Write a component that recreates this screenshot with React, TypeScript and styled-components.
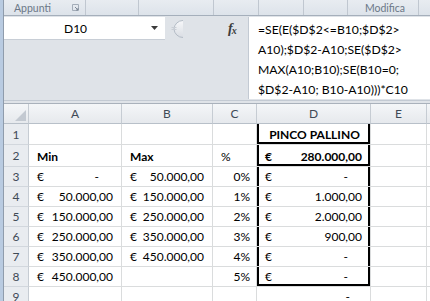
import styled, { createGlobalStyle } from "styled-components";

const GlobalStyle = createGlobalStyle`
  html, body {
    margin: 0;
    padding: 0;
  }
  body {
    background: #dfe3e8;
    font-family: Lato, "Liberation Sans", sans-serif;
  }
`;

const Frame = styled.div`
  width: 430px;
  height: 301px;
  overflow: hidden;
  box-sizing: border-box;
  border-left: 3px solid #b9cbe1;
`;

const Window = styled.div`
  height: 100%;
  display: flex;
  flex-direction: column;
  background: #dfe3e8;
  border-left: 1px solid #8f9cac;
`;

// ribbon (only the bottom group labels are visible)
const RibbonStrip = styled.div`
  display: flex;
  flex: none;
  height: 16px;
  box-sizing: border-box;
  background: linear-gradient(#e8ecf1, #dde3ea);
  border-bottom: 1px solid #a5afbb;
`;

const RibbonGroup = styled.div<{ $w: number; $center?: boolean }>`
  flex: none;
  width: ${(p) => p.$w}px;
  box-sizing: border-box;
  border-right: 1px solid #c0c7d0;
  display: flex;
  align-items: center;
  justify-content: ${(p) => (p.$center ? "center" : "space-between")};
  padding: 0 6px 0 10px;
  font-size: 10.5px;
  color: #6b7787;
  white-space: nowrap;
`;

const FormulaBar = styled.div`
  display: flex;
  flex: none;
  height: 85px;
  box-sizing: border-box;
  padding-top: 1px;
  border-bottom: 1px solid #c3cad3;
`;

const NameArea = styled.div`
  flex: none;
  width: 244px;
  display: flex;
  align-items: flex-start;
`;

const NameBox = styled.div`
  width: 161px;
  height: 23px;
  box-sizing: border-box;
  background: #fff;
  border-bottom: 1px solid #c8ced6;
  display: flex;
  align-items: center;
  justify-content: space-between;
  padding: 0 7px 0 60px;
  font-size: 12px;
  color: #000;
`;

const FxBox = styled.div`
  margin-left: 45px;
  margin-top: 4px;
  font-family: "Liberation Serif", serif;
  font-style: italic;
  font-weight: bold;
  font-size: 14px;
  color: #3c3c3c;
  letter-spacing: -1px;

  sub {
    font-size: 10px;
    vertical-align: -1px;
  }
`;

const FormulaInput = styled.div`
  flex: 1;
  height: 82px;
  box-sizing: border-box;
  background: #fff;
  border-left: 1px solid #c3cad3;
  padding: 3px 0 0 9px;
  font-size: 12.2px;
  line-height: 20px;
  color: #000;
  white-space: nowrap;
`;

const Grid = styled.div`
  margin-top: 2px;
  display: grid;
  grid-template-columns: 25px 93px 91px 44px 114px 56px 1fr;
  grid-template-rows: 20px 21px 22px repeat(7, 20px);
  background: #fff;
  border-top: 1px solid #a9b1bb;
  font-size: 12px;
  color: #000;
`;

const HeadCell = styled.div<{ $row?: boolean }>`
  box-sizing: border-box;
  background: ${(p) =>
    p.$row ? "#e9ecf0" : "linear-gradient(#f4f6f8, #e6e9ed)"};
  border-right: 1px solid #c6ccd3;
  border-bottom: 1px solid ${(p) => (p.$row ? "#d2d7dd" : "#b8c0c9")};
  display: flex;
  align-items: center;
  justify-content: center;
  color: #3f4a56;
  font-size: 12px;
`;

const Corner = styled(HeadCell)`
  align-items: flex-end;
  justify-content: flex-end;
  padding: 0 2px 2px 0;
`;

type CellProps = {
  $align?: "left" | "right" | "center";
  $bold?: boolean;
  $boxL?: boolean;
  $boxR?: boolean;
  $boxB?: boolean;
};

const boxShadow = (p: CellProps) => {
  const s: string[] = [];
  if (p.$boxL) s.push("inset 2px 0 0 #000");
  if (p.$boxR) s.push("inset -2px 0 0 #000");
  if (p.$boxB) s.push("inset 0 -2px 0 #000");
  return s.length ? s.join(", ") : "none";
};

const Cell = styled.div<CellProps>`
  box-sizing: border-box;
  border-right: 1px solid #dadcdd;
  border-bottom: 1px solid #dadcdd;
  display: flex;
  align-items: flex-end;
  justify-content: ${(p) =>
    p.$align === "right"
      ? "flex-end"
      : p.$align === "center"
        ? "center"
        : "flex-start"};
  padding: 0 6px 2px 8px;
  font-weight: ${(p) => (p.$bold ? 700 : 400)};
  white-space: nowrap;
  box-shadow: ${(p) => boxShadow(p)};
`;

const Money = styled(Cell)`
  justify-content: space-between;
  padding-right: 8px;
`;

const Dash = styled.span`
  padding-right: 14px;
`;

function Launcher() {
  return (
    <svg width="7" height="7" viewBox="0 0 7 7">
      <path d="M0.5 0.5h6v6h-6z" fill="none" stroke="#a3acb8" />
      <path d="M3 3l3 3M4 6h2V4" fill="none" stroke="#7e8896" />
    </svg>
  );
}

function DropArrow() {
  return (
    <svg width="7" height="4" viewBox="0 0 7 4">
      <path d="M0 0h7L3.5 4z" fill="#3b3b3b" />
    </svg>
  );
}

function Grip() {
  return (
    <svg width="18" height="22" viewBox="0 0 18 22" style={{ marginTop: 1 }}>
      <defs>
        <linearGradient id="gg" x1="0" y1="0" x2="0" y2="1">
          <stop offset="0" stopColor="#f7f8fa" />
          <stop offset="1" stopColor="#d9dde3" />
        </linearGradient>
      </defs>
      <path
        d="M18 2.5A9 9 0 0 0 9 11a9 9 0 0 0 9 8.5"
        fill="url(#gg)"
        stroke="#b4bcc6"
      />
      <path d="M6.5 9.5h5M6.5 11.5h5" stroke="#c9ced5" />
    </svg>
  );
}

type Acc = { v?: string; dash?: boolean };

type Row = {
  a?: Acc;
  b?: Acc;
  c?: string;
  d?: Acc;
};

const rows: Row[] = [
  { a: { v: "50.000,00" }, b: { v: "150.000,00" }, c: "1%", d: { v: "1.000,00" } },
  { a: { v: "150.000,00" }, b: { v: "250.000,00" }, c: "2%", d: { v: "2.000,00" } },
  { a: { v: "250.000,00" }, b: { v: "350.000,00" }, c: "3%", d: { v: "900,00" } },
  { a: { v: "350.000,00" }, b: { v: "450.000,00" }, c: "4%", d: { dash: true } },
  { a: { v: "450.000,00" }, c: "5%", d: { dash: true } },
];

function Amount({ acc, boxed, last }: { acc?: Acc; boxed?: boolean; last?: boolean }) {
  if (!acc) return <Cell />;
  return (
    <Money $boxL={boxed} $boxR={boxed} $boxB={last}>
      <span>€</span>
      {acc.dash ? <Dash>-</Dash> : <span>{acc.v}</span>}
    </Money>
  );
}

export default function App() {
  return (
    <>
      <GlobalStyle />
      <Frame>
        <Window>
          <RibbonStrip>
            <RibbonGroup $w={82}>
              Appunti
              <Launcher />
            </RibbonGroup>
            <RibbonGroup $w={53} />
            <RibbonGroup $w={75} />
            <RibbonGroup $w={45} />
            <RibbonGroup $w={45} />
            <RibbonGroup $w={44} />
            <RibbonGroup $w={71} $center>
              Modifica
            </RibbonGroup>
          </RibbonStrip>

          <FormulaBar>
            <NameArea>
              <NameBox>
                D10
                <DropArrow />
              </NameBox>
              <Grip />
              <FxBox>
                f<sub>x</sub>
              </FxBox>
            </NameArea>
            <FormulaInput>
              <div>=SE(E($D$2&lt;=B10;$D$2&gt;</div>
              <div>A10);$D$2-A10;SE($D$2&gt;</div>
              <div>MAX(A10;B10);SE(B10=0;</div>
              <div>$D$2-A10; B10-A10)))*C10</div>
            </FormulaInput>
          </FormulaBar>

          <Grid>
            <Corner>
              <svg width="11" height="11" viewBox="0 0 11 11">
                <path d="M11 0v11H0z" fill="#c3c9d1" />
              </svg>
            </Corner>
            <HeadCell>A</HeadCell>
            <HeadCell>B</HeadCell>
            <HeadCell>C</HeadCell>
            <HeadCell>D</HeadCell>
            <HeadCell>E</HeadCell>
            <HeadCell />

            {/* riga 1 */}
            <HeadCell $row>1</HeadCell>
            <Cell />
            <Cell />
            <Cell />
            <Cell $align="center" $bold $boxL $boxR $boxB>
              PINCO PALLINO
            </Cell>
            <Cell />
            <Cell />

            {/* riga 2 */}
            <HeadCell $row>2</HeadCell>
            <Cell $bold>Min</Cell>
            <Cell $bold>Max</Cell>
            <Cell>%</Cell>
            <Money $bold $boxL $boxR $boxB>
              <span>€</span>
              <span>280.000,00</span>
            </Money>
            <Cell />
            <Cell />

            {/* riga 3 */}
            <HeadCell $row>3</HeadCell>
            <Amount acc={{ dash: true }} />
            <Amount acc={{ v: "50.000,00" }} />
            <Cell $align="right">0%</Cell>
            <Amount acc={{ dash: true }} boxed />
            <Cell />
            <Cell />

            {rows.map((r, i) => (
              <>
                <HeadCell $row key={`h${i}`}>
                  {i + 4}
                </HeadCell>
                <Amount acc={r.a} />
                <Amount acc={r.b} />
                <Cell $align="right">{r.c}</Cell>
                <Amount acc={r.d} boxed last={i === rows.length - 1} />
                <Cell />
                <Cell />
              </>
            ))}

            {/* riga 9 */}
            <HeadCell $row>9</HeadCell>
            <Cell />
            <Cell />
            <Cell />
            <Cell $align="right">
              <Dash>-</Dash>
            </Cell>
            <Cell />
            <Cell />
          </Grid>
        </Window>
      </Frame>
    </>
  );
}
